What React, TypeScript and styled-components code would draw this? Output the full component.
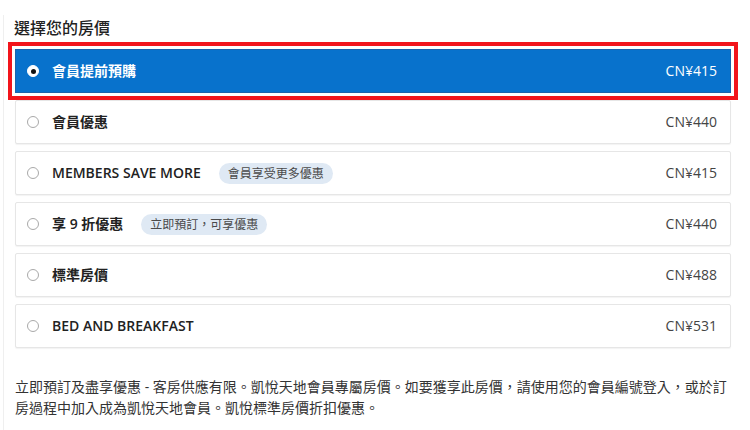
import React from "react";
import styled, { createGlobalStyle } from "styled-components";

const Global = createGlobalStyle`
  html, body { margin: 0; padding: 0; background: #fff; }
  body { font-family: "Open Sans", "Noto Sans CJK TC", sans-serif; color: #222; }
`;

const Page = styled.div`
  margin: 15px 0 0 3px;
  border-left: 1px solid #efefef;
  padding: 3px 18px 0 11px;
  width: 746px;
  box-sizing: border-box;
  min-height: 415px;
`;

const Title = styled.h2`
  margin: 0 0 11px -1px;
  font-size: 16px;
  line-height: 20px;
  font-weight: 500;
  color: #222;
`;

const List = styled.div`
  display: flex;
  flex-direction: column;
  gap: 7px;
`;

const Card = styled.label<{ $selected?: boolean }>`
  display: flex;
  align-items: center;
  height: 44px;
  box-sizing: border-box;
  padding: 0 13px 0 11px;
  border: 1px solid ${(p) => (p.$selected ? "#1d63ab" : "#e6e6e6")};
  border-radius: ${(p) => (p.$selected ? "0" : "2px")};
  background: ${(p) => (p.$selected ? "#0872cc" : "#fff")};
  color: ${(p) => (p.$selected ? "#fff" : "#222")};
  box-shadow: ${(p) => (p.$selected ? "none" : "0 1px 1px rgba(0,0,0,0.05)")};
  outline: ${(p) => (p.$selected ? "4px solid #f2141b" : "none")};
  outline-offset: 3px;
`;

const Radio = styled.span<{ $selected?: boolean }>`
  width: 12px;
  height: 12px;
  box-sizing: border-box;
  border-radius: 50%;
  border: 1px solid ${(p) => (p.$selected ? "#fff" : "#a9a9a9")};
  background: #fff;
  display: flex;
  align-items: center;
  justify-content: center;
  flex: none;
  margin-right: 13px;
  &::after {
    content: "";
    display: ${(p) => (p.$selected ? "block" : "none")};
    width: 5px;
    height: 5px;
    border-radius: 50%;
    background: #111;
  }
`;

const Label = styled.span`
  font-size: 14px;
  font-weight: 600;
  line-height: 20px;
  white-space: nowrap;
`;

const Badge = styled.span`
  margin-left: 18px;
  height: 21px;
  padding: 0 9px;
  border-radius: 11px;
  background: #dfe9f4;
  color: #4a4a4a;
  font-size: 12px;
  line-height: 21px;
  white-space: nowrap;
`;

const Price = styled.span<{ $selected?: boolean }>`
  margin-left: auto;
  font-size: 14px;
  line-height: 20px;
  color: ${(p) => (p.$selected ? "#fff" : "#444")};
`;

const Note = styled.p`
  margin: 28px 0 0 0;
  font-size: 14px;
  line-height: 21px;
  color: #333;
`;

type Rate = { name: string; price: string; badge?: string };

const rates: Rate[] = [
  { name: "會員提前預購", price: "CN¥415" },
  { name: "會員優惠", price: "CN¥440" },
  { name: "MEMBERS SAVE MORE", price: "CN¥415", badge: "會員享受更多優惠" },
  { name: "享 9 折優惠", price: "CN¥440", badge: "立即預訂，可享優惠" },
  { name: "標準房價", price: "CN¥488" },
  { name: "BED AND BREAKFAST", price: "CN¥531" },
];

export default function App() {
  return (
    <>
      <Global />
      <Page>
        <Title>選擇您的房價</Title>
        <List>
          {rates.map((r, i) => {
            const sel = i === 0;
            return (
              <Card key={i} $selected={sel}>
                <Radio $selected={sel} />
                <Label>{r.name}</Label>
                {r.badge && <Badge>{r.badge}</Badge>}
                <Price $selected={sel}>{r.price}</Price>
              </Card>
            );
          })}
        </List>
        <Note>
          立即預訂及盡享優惠 - 客房供應有限。凱悅天地會員專屬房價。如要獲享此房價，請使用您的會員編號登入，或於訂房過程中加入成為凱悅天地會員。凱悅標準房價折扣優惠。
        </Note>
      </Page>
    </>
  );
}
